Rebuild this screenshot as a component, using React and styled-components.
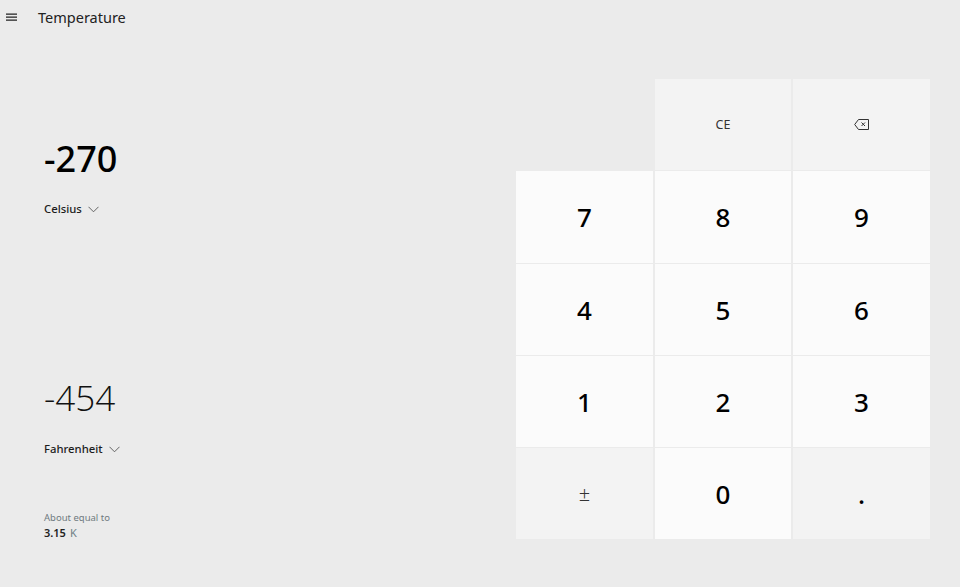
import React from "react";
import styled, { createGlobalStyle } from "styled-components";

const GlobalStyle = createGlobalStyle`
  html, body {
    margin: 0;
    padding: 0;
    background: #ebebeb;
  }
  body {
    font-family: "Noto Sans", "Open Sans", "Liberation Sans", sans-serif;
  }
`;

const keys = [
  { label: "", kind: "blank" },
  { label: "CE", kind: "small" },
  { label: "backspace", kind: "icon" },
  { label: "7" },
  { label: "8" },
  { label: "9" },
  { label: "4" },
  { label: "5" },
  { label: "6" },
  { label: "1" },
  { label: "2" },
  { label: "3" },
  { label: "±", kind: "sign" },
  { label: "0" },
  { label: ".", kind: "dot" },
];

function MenuIcon() {
  return (
    <svg width="11" height="9" viewBox="0 0 11 9" fill="none" stroke="#222" strokeWidth="1.3">
      <path d="M0 1.2h11M0 4.2h11M0 7.2h11" />
    </svg>
  );
}

function Chevron() {
  return (
    <svg width="11" height="7" viewBox="0 0 11 7" fill="none" stroke="#555" strokeWidth="0.9">
      <path d="M0.5 0.8L5.5 5.8L10.5 0.8" />
    </svg>
  );
}

function BackspaceIcon() {
  return (
    <svg width="15" height="11" viewBox="0 0 15 11" fill="none" stroke="#333" strokeWidth="1">
      <path d="M4.5 0.5H14.5V10.5H4.5L0.7 5.5Z" />
      <path d="M7.5 3.5L11 7M11 3.5L7.5 7" />
    </svg>
  );
}

export default function App() {
  return (
    <>
      <GlobalStyle />
      <Page>
        <Header>
          <MenuButton>
            <MenuIcon />
          </MenuButton>
          <Title>Temperature</Title>
        </Header>
        <Main>
          <Values>
            <InputValue>-270</InputValue>
            <UnitPicker>
              Celsius <Chevron />
            </UnitPicker>
            <OutputValue>-454</OutputValue>
            <UnitPicker>
              Fahrenheit <Chevron />
            </UnitPicker>
            <AboutLabel>About equal to</AboutLabel>
            <AboutValue>
              3.15<AboutUnit>K</AboutUnit>
            </AboutValue>
          </Values>
          <Keypad>
            {keys.map((key, index) => {
              if (key.kind === "blank") return <Blank key={index} />;
              return (
                <Key key={index} $kind={key.kind}>
                  {key.kind === "icon" ? <BackspaceIcon /> : key.label}
                </Key>
              );
            })}
          </Keypad>
        </Main>
      </Page>
    </>
  );
}

const Page = styled.div`
  width: 960px;
  height: 587px;
  overflow: hidden;
  background: #ebebeb;
  color: #000;
`;

const Header = styled.div`
  height: 34px;
  display: flex;
  align-items: center;
`;

const MenuButton = styled.div`
  width: 38px;
  padding-left: 6px;
  box-sizing: border-box;
  display: flex;
  align-items: center;
`;

const Title = styled.div`
  font-size: 14.5px;
  color: #222;
`;

const Main = styled.div`
  display: flex;
  justify-content: space-between;
  padding: 45px 30px 0 44px;
`;

const Values = styled.div`
  display: flex;
  flex-direction: column;
  align-items: flex-start;
`;

const InputValue = styled.div`
  margin-top: 56px;
  font-size: 36px;
  line-height: 48px;
  font-weight: 500;
`;

const OutputValue = styled.div`
  margin-top: 156px;
  font-family: "Open Sans", "Noto Sans", sans-serif;
  font-size: 35px;
  line-height: 50px;
  font-weight: 300;
  color: #111;
`;

const UnitPicker = styled.div`
  display: flex;
  align-items: center;
  gap: 6px;
  margin-top: 18px;
  font-size: 11.3px;
  line-height: 16px;
  font-weight: 500;
  color: #1c1c1c;
`;

const AboutLabel = styled.div`
  margin-top: 54px;
  font-size: 9.5px;
  line-height: 13px;
  color: #6f7a7f;
`;

const AboutValue = styled.div`
  margin-top: 1px;
  font-size: 11px;
  line-height: 15px;
  font-weight: 600;
  color: #222;
`;

const AboutUnit = styled.span`
  margin-left: 4px;
  font-weight: 400;
  color: #6f8086;
`;

const Keypad = styled.div`
  width: 414px;
  display: grid;
  grid-template-columns: 137px 136px 137px;
  grid-template-rows: 91px 92px 91px 91px 91px;
  column-gap: 2px;
  row-gap: 1px;
`;

const Blank = styled.div``;

const keyFontSize = { small: "12.5px", sign: "20px" };

const Key = styled.div`
  display: flex;
  align-items: center;
  justify-content: center;
  background: ${(p) => (p.$kind ? "#f3f3f3" : "#fbfbfb")};
  color: ${(p) => (p.$kind === "small" || p.$kind === "sign" ? "#333" : "#000")};
  font-size: ${(p) => keyFontSize[p.$kind] || "26px"};
  font-weight: ${(p) => (p.$kind === "small" ? 400 : p.$kind === "sign" ? 300 : 500)};
`;
